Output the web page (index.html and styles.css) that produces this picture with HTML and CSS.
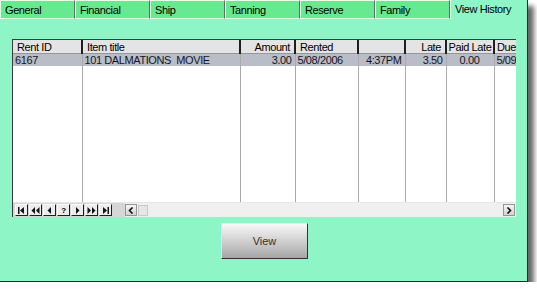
FILE: index.html
```html
<!DOCTYPE html>
<html lang="en">
<head>
    <meta charset="UTF-8">
    <title>View History</title>
    <link rel="stylesheet" href="styles.css">
</head>
<body>
    <div class="window">
        <div class="tabs">
            <div class="tab">General</div>
            <div class="tab">Financial</div>
            <div class="tab">Ship</div>
            <div class="tab">Tanning</div>
            <div class="tab">Reserve</div>
            <div class="tab">Family</div>
            <div class="tab active">View History</div>
        </div>
        <div class="page">
            <div class="grid">
                <table>
                    <colgroup>
                        <col style="width:69px"><col style="width:158px"><col style="width:55px"><col style="width:63px">
                        <col style="width:47px"><col style="width:41px"><col style="width:48px"><col style="width:22px">
                    </colgroup>
                    <thead>
                        <tr>
                            <th>Rent ID</th>
                            <th>Item title</th>
                            <th class="right">Amount</th>
                            <th>Rented</th>
                            <th></th>
                            <th class="right">Late</th>
                            <th class="center">Paid Late</th>
                            <th>Due</th>
                        </tr>
                    </thead>
                    <tbody>
                        <tr class="selected">
                            <td>6167</td>
                            <td>101 DALMATIONS&nbsp; MOVIE</td>
                            <td class="right">3.00</td>
                            <td>5/08/2006</td>
                            <td class="right">4:37PM</td>
                            <td class="right">3.50</td>
                            <td class="center">0.00</td>
                            <td>5/09</td>
                        </tr>
                        <tr class="filler">
                            <td></td><td></td><td></td><td></td><td></td><td></td><td></td><td></td>
                        </tr>
                    </tbody>
                </table>
                <div class="bottombar">
                    <div class="nav">
                        <span class="navbtn"><svg width="9" height="7" viewBox="0 0 9 7"><rect x="1" y="0" width="1.5" height="7"/><path d="M7 0 L3 3.5 L7 7 Z"/></svg></span>
                        <span class="navbtn"><svg width="9" height="7" viewBox="0 0 9 7"><path d="M4 0 L0.5 3.5 L4 7 Z M8.5 0 L5 3.5 L8.5 7 Z"/></svg></span>
                        <span class="navbtn"><svg width="9" height="7" viewBox="0 0 9 7"><path d="M6 0 L2.5 3.5 L6 7 Z"/></svg></span>
                        <span class="navbtn q">?</span>
                        <span class="navbtn"><svg width="9" height="7" viewBox="0 0 9 7"><path d="M3 0 L6.5 3.5 L3 7 Z"/></svg></span>
                        <span class="navbtn"><svg width="9" height="7" viewBox="0 0 9 7"><path d="M0.5 0 L4 3.5 L0.5 7 Z M5 0 L8.5 3.5 L5 7 Z"/></svg></span>
                        <span class="navbtn"><svg width="9" height="7" viewBox="0 0 9 7"><path d="M2 0 L6 3.5 L2 7 Z"/><rect x="6.5" y="0" width="1.5" height="7"/></svg></span>
                    </div>
                    <div class="scroll">
                        <span class="sbtn"><svg width="6" height="7" viewBox="0 0 6 7"><path d="M4.5 0.5 L1.5 3.5 L4.5 6.5" fill="none" stroke="#111" stroke-width="1.6"/></svg></span>
                        <span class="thumb"></span>
                        <span class="track"></span>
                        <span class="sbtn"><svg width="6" height="7" viewBox="0 0 6 7"><path d="M1.5 0.5 L4.5 3.5 L1.5 6.5" fill="none" stroke="#111" stroke-width="1.6"/></svg></span>
                    </div>
                </div>
            </div>
            <div class="actions">
                <button class="button">View</button>
            </div>
        </div>
    </div>
</body>
</html>
```

FILE: styles.css
```css
body {
    background-color: rgb(255, 255, 255);
    color: rgb(0, 0, 0);
    font-family: "Liberation Sans", Arial, sans-serif;
    font-size: 11px;
    letter-spacing: -0.4px;
    margin: 0;
    padding: 0;
}

.window {
    background-color: rgb(142, 245, 199);
    border-bottom: 1px solid rgb(40, 40, 40);
    border-right: 1px solid rgb(40, 40, 40);
    box-shadow: 6px 6px 5px rgba(0, 0, 0, 0.6);
    box-sizing: border-box;
    height: 282px;
    width: 528px;
}

.tabs {
    display: flex;
    height: 19px;
}

.tab {
    background-color: rgb(103, 233, 143);
    border-bottom: 1px solid rgb(225, 255, 235);
    border-left: 1px solid rgb(235, 255, 240);
    border-right: 1px solid rgb(100, 110, 105);
    border-top: 1px solid rgb(235, 255, 240);
    box-sizing: border-box;
    height: 19px;
    line-height: 16px;
    padding: 1px 0 0 4px;
    width: 75px;
}

.tab.active {
    background-color: transparent;
    border-bottom: none;
    border-right: none;
    border-top: none;
    flex: 1;
    line-height: 14px;
    padding-top: 2px;
}

.page {
    padding: 20px 10px 0 12px;
}

.grid {
    background-color: rgb(255, 255, 255);
    border-left: 1px solid rgb(60, 60, 60);
    border-top: 1px solid rgb(60, 60, 60);
    box-sizing: border-box;
    display: flex;
    flex-direction: column;
    height: 178px;
    width: 504px;
}

table {
    border-collapse: collapse;
    flex: 1;
    table-layout: fixed;
    width: 503px;
}

th {
    background-color: rgb(228, 228, 228);
    border-bottom: 1px solid rgb(150, 150, 150);
    border-right: 2px solid rgb(30, 30, 30);
    font-weight: normal;
    height: 13px;
    line-height: 12px;
    overflow: hidden;
    padding: 0 3px 0 4px;
    text-align: left;
    white-space: nowrap;
}

th:last-child {
    border-right: none;
    padding-left: 2px;
}

th.center {
    padding: 0;
}

td {
    border-right: 1px solid rgb(170, 170, 170);
    height: 12px;
    line-height: 12px;
    overflow: hidden;
    padding: 0 3px 0 2px;
    white-space: nowrap;
}

td:last-child {
    border-right: none;
    padding-right: 0;
}

.selected td {
    background-color: rgb(185, 189, 199);
    color: rgb(20, 20, 40);
}

.filler td {
    height: auto;
}

.right {
    text-align: right;
}

th.right {
    padding-right: 4px;
}

.center {
    text-align: center;
}

.bottombar {
    background-color: rgb(240, 240, 240);
    border-top: 1px solid rgb(230, 230, 230);
    display: flex;
    height: 14px;
}

.nav {
    align-items: center;
    background-color: rgb(214, 214, 214);
    display: flex;
    gap: 1px;
    padding: 0 13px 0 2px;
}

.navbtn {
    align-items: center;
    background-color: rgb(236, 236, 236);
    border: 1px solid rgb(30, 30, 30);
    border-left-color: rgb(250, 250, 250);
    border-top-color: rgb(250, 250, 250);
    box-sizing: border-box;
    display: flex;
    font-size: 8px;
    font-weight: bold;
    height: 12px;
    justify-content: center;
    width: 13px;
}

.navbtn svg {
    fill: rgb(20, 20, 20);
}

.scroll {
    align-items: center;
    display: flex;
    flex: 1;
    padding: 0 1px 0 0;
}

.sbtn {
    align-items: center;
    background: linear-gradient(rgb(245, 245, 245), rgb(210, 210, 210));
    border: 1px solid rgb(150, 150, 150);
    box-sizing: border-box;
    display: flex;
    height: 12px;
    justify-content: center;
    width: 12px;
}

.thumb {
    background-color: rgb(230, 230, 230);
    border: 1px solid rgb(200, 200, 200);
    box-sizing: border-box;
    height: 11px;
    margin-left: 1px;
    width: 10px;
}

.track {
    flex: 1;
}

.actions {
    display: flex;
    justify-content: center;
    padding: 6px 0 0 0;
}

.button {
    background: linear-gradient(rgb(248, 248, 248), rgb(200, 200, 200) 60%, rgb(165, 165, 165));
    border: 1px solid rgb(50, 50, 50);
    border-left-color: rgb(235, 235, 235);
    border-top-color: rgb(235, 235, 235);
    color: rgb(50, 50, 50);
    font-family: "Liberation Sans", Arial, sans-serif;
    font-size: 11px;
    height: 36px;
    width: 87px;
}
```
